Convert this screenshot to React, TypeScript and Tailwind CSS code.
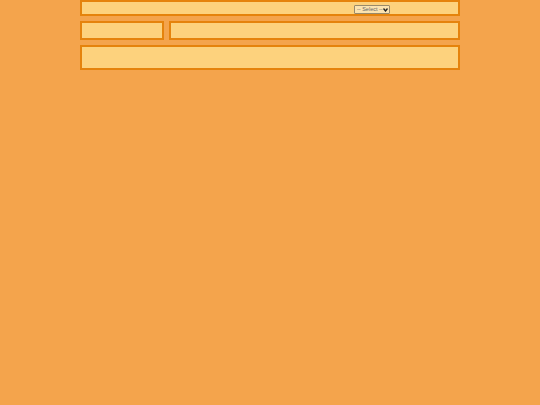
import React from "react";

export default function App() {
  return (
    <div className="min-h-[405px] w-full bg-[#f4a44c]" style={{ fontFamily: '"Liberation Sans", Arial, sans-serif' }}>
      <div className="mx-auto flex w-[380px] flex-col">
        <div className="flex h-[16px] items-start justify-end border-2 border-[#e5830c] bg-[#fdd27d] pr-[68px] pt-[3px]">
          <div className="flex h-[9px] w-[36px] items-center justify-between rounded-[1px] border border-[#9a8a6a] bg-[#fbe3b0] pl-[2px] pr-[1px] text-[5.5px] leading-[7px] text-[#666]">
            <span className="whitespace-nowrap">-- Select --</span>
            <svg width="5" height="4" viewBox="0 0 5 4" className="shrink-0"><path d="M0.5 0.5 L2.5 3 L4.5 0.5" stroke="#222" strokeWidth="1.3" fill="none" /></svg>
          </div>
        </div>
        <div className="mt-[5px] flex h-[19px] gap-[5px]">
          <div className="w-[84px] border-2 border-[#e5830c] bg-[#fdd27d]" />
          <div className="flex-1 border-2 border-[#e5830c] bg-[#fdd27d]" />
        </div>
        <div className="mt-[5px] h-[25px] border-2 border-[#e5830c] bg-[#fdd27d]" />
      </div>
    </div>
  );
}
